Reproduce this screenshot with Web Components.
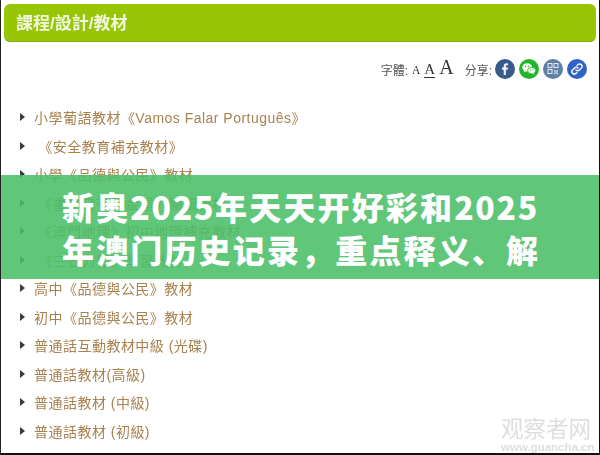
<!DOCTYPE html>
<html lang="zh">
<head>
<meta charset="utf-8">
<title>課程/設計/教材</title>
<style>
  html, body { margin: 0; padding: 0; background: #fff; }
  body { width: 600px; height: 455px; overflow: hidden; }
</style>
</head>
<body>
<course-page>
  <title-bar slot="top">課程/設計/教材</title-bar>
  <share-tools slot="top"></share-tools>
  <material-list>
    <material-item>小學葡語教材《Vamos Falar Português》</material-item>
    <material-item>&nbsp;《安全教育補充教材》</material-item>
    <material-item>小學《品德與公民》教材</material-item>
    <material-item>&nbsp;《書中自有黃金屋》閱讀教材</material-item>
    <material-item>&nbsp;《澳門地理》初中地理補充教材</material-item>
    <material-item>&nbsp;《三日力印》學習教材</material-item>
    <material-item>高中《品德與公民》教材</material-item>
    <material-item>初中《品德與公民》教材</material-item>
    <material-item>普通話互動教材中級 (光碟)</material-item>
    <material-item>普通話教材(高級)</material-item>
    <material-item>普通話教材 (中級)</material-item>
    <material-item>普通話教材 (初級)</material-item>
  </material-list>
  <site-mark slot="over"></site-mark>
  <headline-banner slot="over">新奥<span>2025</span>年天天开好彩和<span>2025</span>年澳门历史记录，重点释义、解</headline-banner>
</course-page>

<script>
const SANS = '"Liberation Sans", "Noto Sans CJK TC", sans-serif';

class CoursePage extends HTMLElement {
  constructor() {
    super();
    this.attachShadow({ mode: "open" }).innerHTML = `
      <style>
        :host {
          display: block;
          position: relative;
          box-sizing: border-box;
          width: 600px;
          height: 455px;
          overflow: hidden;
          background: #fff;
          border-left: 1px solid #222;
          border-right: 1px solid #111;
          border-bottom: 2px solid #111;
          font-family: ${SANS};
        }
        .paper { filter: blur(0.35px); padding: 4px 3px 0 3px; }
      </style>
      <div class="paper"><slot name="top"></slot><slot></slot></div>
      <slot name="over"></slot>`;
  }
}
customElements.define("course-page", CoursePage);

class TitleBar extends HTMLElement {
  constructor() {
    super();
    this.attachShadow({ mode: "open" }).innerHTML = `
      <style>
        :host {
          display: flex;
          align-items: center;
          box-sizing: border-box;
          height: 38px;
          padding: 0 0 3px 12px;
          background: #97c704;
          border-radius: 6px;
          border-bottom: 1px solid #86ad12;
          color: #f2f6df;
          font-size: 17px;
          font-weight: bold;
        }
      </style>
      <slot></slot>`;
  }
}
customElements.define("title-bar", TitleBar);

class ShareTools extends HTMLElement {
  constructor() {
    super();
    this.attachShadow({ mode: "open" }).innerHTML = `
      <style>
        :host {
          display: flex;
          align-items: center;
          justify-content: flex-end;
          height: 20px;
          margin-top: 17px;
          padding-right: 9px;
          color: #555;
          font-size: 12px;
        }
        .sizes { display: flex; align-items: baseline; gap: 4px; margin: -3px 11px 0 4px; font-family: "Liberation Serif", serif; color: #333; }
        .a1 { font-size: 11.5px; }
        .a2 { font-size: 15px; border-bottom: 1px solid #333; line-height: 15px; }
        .a3 { font-size: 20px; }
        .icons { display: flex; gap: 4px; margin-left: 3px; }
        svg { display: block; width: 20px; height: 20px; }
      </style>
      <span>字體:</span>
      <span class="sizes"><span class="a1">A</span><span class="a2">A</span><span class="a3">A</span></span>
      <span>分享:</span>
      <span class="icons">
        <svg viewBox="0 0 20 20"><circle cx="10" cy="10" r="10" fill="#3b5a8c"/><path d="M10.9 16v-5.3h1.8l.3-2.1h-2.1V7.3c0-.6.2-1 1-1H13V4.4c-.2 0-.9-.1-1.6-.1-1.6 0-2.7 1-2.7 2.8v1.5H7v2.1h1.7V16z" fill="#eef1f6"/></svg>
        <svg viewBox="0 0 20 20"><circle cx="10" cy="10" r="10" fill="#20b52a"/><ellipse cx="8.2" cy="8.4" rx="5" ry="4.2" fill="#f4fbf3"/><path d="M5.5 11.5l-.6 2 2.2-1.2z" fill="#f4fbf3"/><ellipse cx="12.6" cy="11.6" rx="4" ry="3.3" fill="#f4fbf3" stroke="#20b52a" stroke-width=".8"/><path d="M14.6 14.3l.6 1.5-2-1z" fill="#f4fbf3"/><circle cx="6.6" cy="7.4" r=".7" fill="#20b52a"/><circle cx="9.8" cy="7.4" r=".7" fill="#20b52a"/><circle cx="11.3" cy="11" r=".55" fill="#20b52a"/><circle cx="14" cy="11" r=".55" fill="#20b52a"/></svg>
        <svg viewBox="0 0 20 20"><circle cx="10" cy="10" r="10" fill="#5f7fa6"/><g fill="none" stroke="#e6ecf3" stroke-width="1"><rect x="5" y="4.5" width="4" height="4"/><rect x="11" y="4.5" width="4" height="4"/><rect x="5" y="10.5" width="4" height="4"/></g><path d="M11 11h1.4v1.4H11zM13.6 11H15v1.4h-1.4zM12.3 12.4h1.4v1.4h-1.4zM11 13.8h1.4v1.4H11zM13.6 13.8H15v1.4h-1.4z" fill="#e6ecf3"/></svg>
        <svg viewBox="0 0 20 20"><circle cx="10" cy="10" r="10" fill="#2f63c9"/><g fill="none" stroke="#eef2fb" stroke-width="1.5" stroke-linecap="round"><path d="M9 11a2.4 2.4 0 0 0 3.4 0l2-2a2.4 2.4 0 0 0-3.4-3.4l-.9.9"/><path d="M11 9a2.4 2.4 0 0 0-3.4 0l-2 2A2.4 2.4 0 0 0 9 14.4l.9-.9"/></g></svg>
      </span>`;
  }
}
customElements.define("share-tools", ShareTools);

class MaterialList extends HTMLElement {
  constructor() {
    super();
    this.attachShadow({ mode: "open" }).innerHTML = `
      <style>
        :host { display: flex; flex-direction: column; margin-top: 24px; padding-left: 16px; }
      </style>
      <slot></slot>`;
  }
}
customElements.define("material-list", MaterialList);

class MaterialItem extends HTMLElement {
  constructor() {
    super();
    this.attachShadow({ mode: "open" }).innerHTML = `
      <style>
        :host {
          display: flex;
          align-items: center;
          gap: 9px;
          height: 28.5px;
          color: #a9814e;
          font-size: 14px;
          letter-spacing: .48px;
          white-space: nowrap;
        }
        i { width: 0; height: 0; border-left: 5px solid #3a3a3a; border-top: 4.5px solid transparent; border-bottom: 4.5px solid transparent; }
      </style>
      <i></i><span><slot></slot></span>`;
  }
}
customElements.define("material-item", MaterialItem);

class HeadlineBanner extends HTMLElement {
  constructor() {
    super();
    this.attachShadow({ mode: "open" }).innerHTML = `
      <style>
        :host {
          display: block;
          position: absolute;
          left: 0;
          right: 0;
          top: 175px;
          box-sizing: border-box;
          height: 104px;
          padding: 10px 50px 0 61px;
          background: rgba(74, 190, 104, .88);
          color: #fff;
          font-family: "Noto Sans CJK SC", sans-serif;
          font-size: 32px;
          font-weight: 900;
          letter-spacing: 2.15px;
          line-height: 43px;
          overflow: hidden;
        }
        ::slotted(span) { letter-spacing: 1.7px; }
      </style>
      <slot></slot>`;
  }
}
customElements.define("headline-banner", HeadlineBanner);

class SiteMark extends HTMLElement {
  constructor() {
    super();
    this.attachShadow({ mode: "open" }).innerHTML = `
      <style>
        :host {
          display: block;
          position: absolute;
          right: 8px;
          top: 412px;
          width: 90px;
          color: #dedede;
          text-align: center;
          filter: blur(.5px);
        }
        .cn { font-family: "Noto Sans CJK SC", sans-serif; font-size: 22.5px; line-height: 30px; }
        .en { font-family: "Liberation Sans", sans-serif; font-size: 11.5px; font-weight: bold; line-height: 10px; }
      </style>
      <div class="cn">观察者网</div>
      <div class="en">www.guancha.cn</div>`;
  }
}
customElements.define("site-mark", SiteMark);
</script>
</body>
</html>
